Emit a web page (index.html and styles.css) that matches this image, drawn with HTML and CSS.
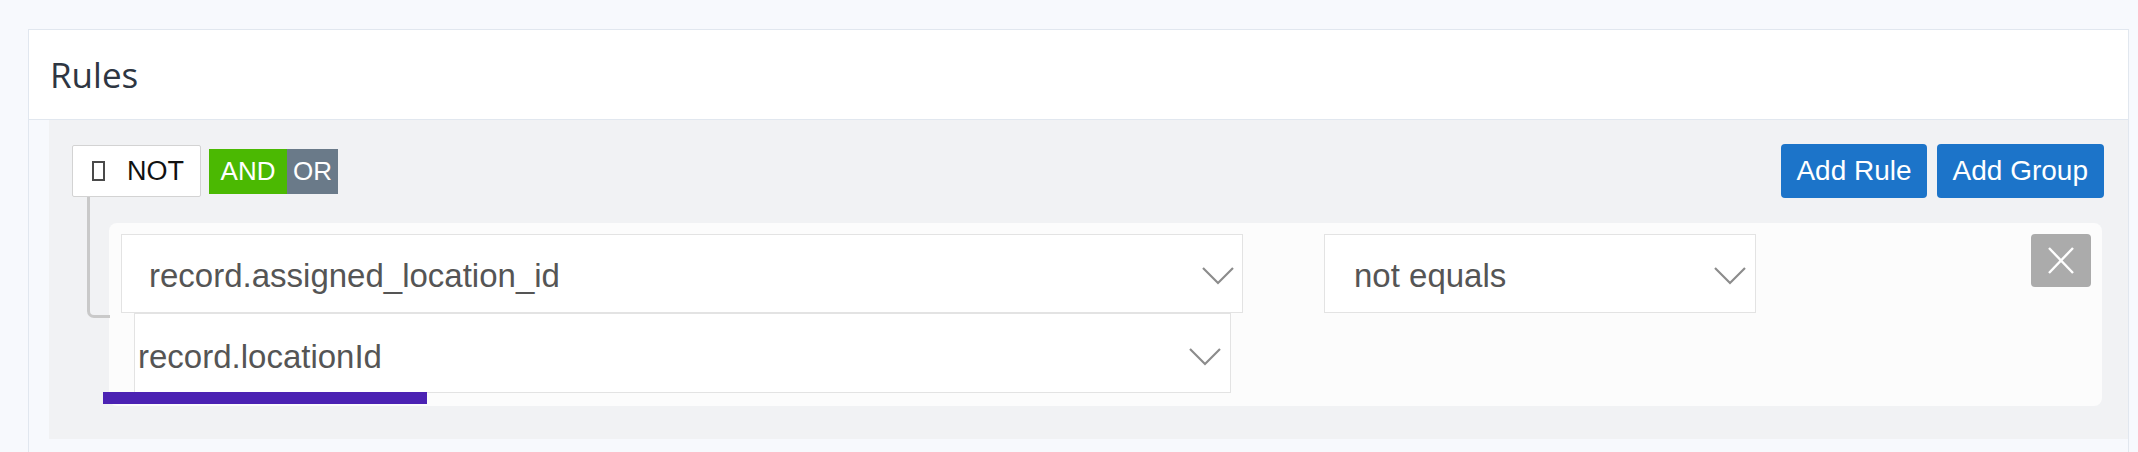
FILE: index.html
```html
<!DOCTYPE html>
<html lang="en">
<head>
    <meta charset="UTF-8">
    <meta name="viewport" content="width=device-width, initial-scale=1.0">
    <title>Rules</title>
    <link rel="stylesheet" href="styles.css">
</head>
<body>
    <div class="card">
        <div class="card-header">Rules</div>

        <div class="card-body">
            <!-- Query builder group -->
            <div class="group">
                <div class="group-header">
                    <div class="group-conditions">
                        <label class="not-toggle"><span class="box"></span>NOT</label>
                        <div class="conjunction">
                            <span class="conj active">AND</span><span class="conj">OR</span>
                        </div>
                    </div>
                    <div class="group-actions">
                        <button class="btn-primary">Add Rule</button>
                        <button class="btn-primary">Add Group</button>
                    </div>
                </div>

                <!-- Single rule -->
                <div class="rule">
                    <div class="rule-row">
                        <div class="select field-select">
                            <span>record.assigned_location_id</span>
                            <svg class="chevron" width="32" height="18" viewBox="0 0 32 18"><polyline points="1,1 16,16 31,1" /></svg>
                        </div>
                        <div class="select operator-select">
                            <span>not equals</span>
                            <svg class="chevron" width="32" height="18" viewBox="0 0 32 18"><polyline points="1,1 16,16 31,1" /></svg>
                        </div>
                        <button class="btn-remove">
                            <svg width="26" height="27" viewBox="0 0 26 27"><line x1="1" y1="1" x2="25" y2="26" /><line x1="25" y1="1" x2="1" y2="26" /></svg>
                        </button>
                    </div>
                    <div class="select value-select">
                        <span>record.locationId</span>
                        <svg class="chevron" width="32" height="18" viewBox="0 0 32 18"><polyline points="1,1 16,16 31,1" /></svg>
                    </div>
                    <div class="progress-bar"></div>
                </div>
            </div>
        </div>
    </div>
</body>
</html>
```

FILE: styles.css
```css
/* Page and card */
body {
    margin: 0;
    background-color: #f7f9fd;
    font-family: "Liberation Sans", Arial, sans-serif;
}
.card {
    box-sizing: border-box;
    width: 2101px;
    margin: 29px 0 0 28px;
    border: 1px solid #e1e7ef;
    border-bottom: none;
    background-color: #f7f9fd;
}
.card-header {
    height: 89px;
    padding-left: 21px;
    display: flex;
    align-items: center;
    background-color: #fff;
    border-bottom: 1px solid #e1e7ef;
    font-family: "Open Sans", sans-serif;
    font-size: 35px;
    color: #2e3642;
}
.card-body {
    padding: 0 0 13px 20px;
}

/* Group panel */
.group {
    background-color: #f1f2f4;
    padding: 24px 24px 33px 23px;
}
.group-header {
    display: flex;
    justify-content: space-between;
    align-items: center;
}
.group-conditions {
    display: flex;
    align-items: center;
    gap: 8px;
}
.not-toggle {
    box-sizing: border-box;
    width: 129px;
    height: 52px;
    display: flex;
    align-items: center;
    padding-left: 19px;
    background-color: #fff;
    border: 1px solid #d3d3d3;
    border-radius: 2px;
    font-size: 27px;
    color: #111;
}
.not-toggle .box {
    flex-shrink: 0;
    box-sizing: border-box;
    width: 13px;
    height: 20px;
    border: 2px solid #4a4a4a;
    margin-right: 22px;
}
.conjunction {
    display: flex;
    height: 45px;
}
.conj {
    display: flex;
    align-items: center;
    padding: 0 6px;
    background-color: #6a7a89;
    color: #fff;
    font-size: 26px;
}
.conj.active {
    width: 78px;
    box-sizing: border-box;
    justify-content: center;
    padding: 0;
    background-color: #4bb902;
}
.group-actions {
    display: flex;
    gap: 10px;
}
.btn-primary {
    height: 54px;
    padding: 0 15px;
    background-color: #1c74c9;
    color: #fff;
    border: none;
    border-radius: 4px;
    font-family: "Liberation Sans", Arial, sans-serif;
    font-size: 28px;
}
.btn-primary + .btn-primary {
    padding: 0 16px;
}

/* Rule row */
.rule {
    position: relative;
    margin: 25px 2px 0 37px;
    padding: 11px 11px 13px 12px;
    background-color: #fcfcfc;
    border-radius: 8px;
}
/* connector line from the group to the rule */
.rule::before {
    content: "";
    position: absolute;
    left: -22px;
    top: -26px;
    width: 20px;
    height: 118px;
    border-left: 3px solid #c9c9c9;
    border-bottom: 3px solid #c9c9c9;
    border-bottom-left-radius: 7px;
}
.rule-row {
    display: flex;
    align-items: flex-start;
}
.select {
    box-sizing: border-box;
    display: flex;
    align-items: center;
    justify-content: space-between;
    background-color: #fff;
    border: 1px solid #e3e3e3;
    font-size: 33px;
    color: #555;
}
.chevron {
    fill: none;
    stroke: #8c8c8c;
    stroke-width: 2.2;
}
.field-select {
    width: 1122px;
    height: 79px;
    padding: 4px 8px 0 27px;
}
.operator-select {
    width: 432px;
    height: 79px;
    margin-left: 81px;
    padding: 4px 9px 0 29px;
}
.value-select {
    width: 1097px;
    height: 80px;
    margin-left: 13px;
    padding: 8px 9px 0 3px;
}
.btn-remove {
    width: 60px;
    height: 53px;
    margin-left: auto;
    display: flex;
    align-items: center;
    justify-content: center;
    background-color: #ababab;
    border: none;
    border-radius: 4px;
    padding: 0;
}
.btn-remove svg {
    stroke: #fff;
    stroke-width: 2.4;
}
.progress-bar {
    position: absolute;
    left: -6px;
    top: 169px;
    width: 324px;
    height: 12px;
    background-color: #4b22b3;
}
```
